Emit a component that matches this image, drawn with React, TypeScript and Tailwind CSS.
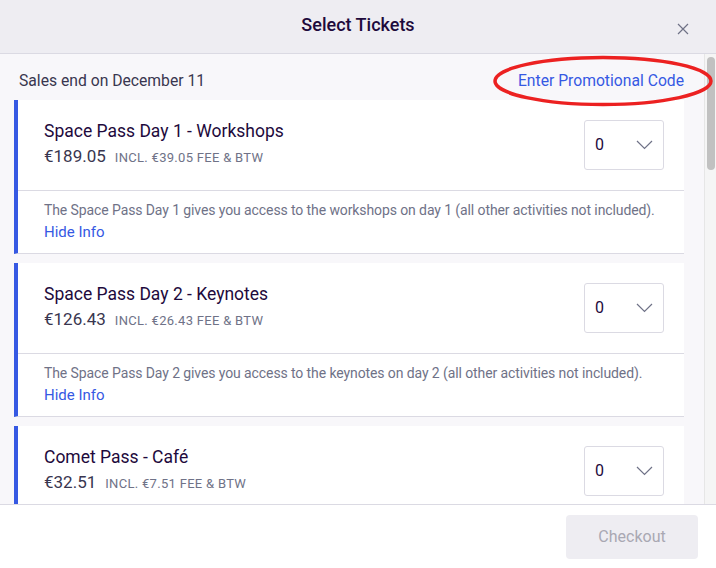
type Ticket = {
  name: string;
  price: string;
  fee: string;
  info?: string;
};

const tickets: Ticket[] = [
  {
    name: "Space Pass Day 1 - Workshops",
    price: "€189.05",
    fee: "INCL. €39.05 FEE & BTW",
    info: "The Space Pass Day 1 gives you access to the workshops on day 1 (all other activities not included).",
  },
  {
    name: "Space Pass Day 2 - Keynotes",
    price: "€126.43",
    fee: "INCL. €26.43 FEE & BTW",
    info: "The Space Pass Day 2 gives you access to the keynotes on day 2 (all other activities not included).",
  },
  {
    name: "Comet Pass - Café",
    price: "€32.51",
    fee: "INCL. €7.51 FEE & BTW",
    info: "The Comet Pass gives you access to the café area.",
  },
];

function Chevron() {
  return (
    <svg width="17" height="10" viewBox="0 0 17 10" fill="none">
      <path d="M1 1l7.5 7.5L16 1" stroke="#6f7287" strokeWidth="1.2" />
    </svg>
  );
}

function TicketCard({ ticket }: { ticket: Ticket }) {
  return (
    <div className="mb-[9px] border-b border-l-4 border-b-[#dbdae3] border-l-[#3659e3] bg-white">
      <div className="flex items-start justify-between pb-[20px] pl-[26px] pr-[20px] pt-[20px]">
        <div>
          <p className="text-[17.5px] leading-[22px] text-[#1e0a3c]">{ticket.name}</p>
          <p className="mt-[3px] flex items-baseline gap-[9px] leading-[22px]">
            <span className="text-[17px] text-[#39364f]">{ticket.price}</span>
            <span className="text-[13px] tracking-[0.3px] text-[#6f7287]">{ticket.fee}</span>
          </p>
        </div>
        <div className="flex h-[50px] w-[80px] items-center justify-between rounded-[3px] border border-[#dbdae3] pl-[10px] pr-[10px]">
          <span className="text-[16px] text-[#1e0a3c]">0</span>
          <Chevron />
        </div>
      </div>
      {ticket.info && (
        <div className="border-t border-[#dbdae3] pb-[10px] pl-[26px] pr-[20px] pt-[9px]">
          <p className="whitespace-nowrap text-[14px] leading-[20px] tracking-[-0.1px] text-[#6f7287]">
            {ticket.info}
          </p>
          <p className="mt-[1px] text-[15px] leading-[22px] text-[#3659e3]">Hide Info</p>
        </div>
      )}
    </div>
  );
}

export default function App() {
  return (
    <div
      className="relative flex h-[568px] w-[716px] flex-col overflow-hidden bg-white"
      style={{ fontFamily: "Roboto, 'Noto Sans', sans-serif" }}
    >
      <header className="relative flex h-[54px] shrink-0 items-center justify-center border-b border-[#dbdae3] bg-[#eeedf2]">
        <h1 className="pb-[4px] text-[18px] font-medium text-[#1e0a3c]">Select Tickets</h1>
        <button type="button" className="absolute right-[26px] top-[22px] p-[1px]">
          <svg width="12" height="12" viewBox="0 0 12 12" fill="none">
            <path d="M1 1l10 10M11 1L1 11" stroke="#6f7287" strokeWidth="1.2" />
          </svg>
        </button>
      </header>

      <div className="flex min-h-0 flex-1 bg-[#f8f7fa]">
        <div className="min-w-0 flex-1 overflow-hidden pl-[14px] pr-[20px]">
          <div className="flex items-center justify-between pb-[9px] pl-[5px] pt-[17px] leading-[20px]">
            <span className="text-[15.7px] text-[#39364f]">Sales end on December 11</span>
            <span className="text-[15.7px] text-[#3659e3]">Enter Promotional Code</span>
          </div>
          {tickets.map((t) => (
            <TicketCard key={t.name} ticket={t} />
          ))}
        </div>
        <div className="w-[12px] shrink-0 border-l border-[#e6e6e6] bg-[#f5f5f5] pl-[2px] pr-[1px] pt-[3px]">
          <div className="h-[113px] rounded-full bg-[#c1c1c1]" />
        </div>
      </div>

      <footer className="flex h-[64px] shrink-0 items-start justify-end border-t border-[#dbdae3] bg-white pr-[18px] pt-[10px]">
        <button
          type="button"
          disabled
          className="h-[44px] w-[132px] rounded-[4px] bg-[#eeedf2] text-[16px] text-[#a9a8b3]"
        >
          Checkout
        </button>
      </footer>

      <svg
        className="pointer-events-none absolute left-[492px] top-[55px]"
        width="222"
        height="52"
        viewBox="0 0 222 52"
        fill="none"
      >
        <ellipse cx="111" cy="26" rx="108" ry="23.5" stroke="#ec2121" strokeWidth="3.5" />
      </svg>
    </div>
  );
}
